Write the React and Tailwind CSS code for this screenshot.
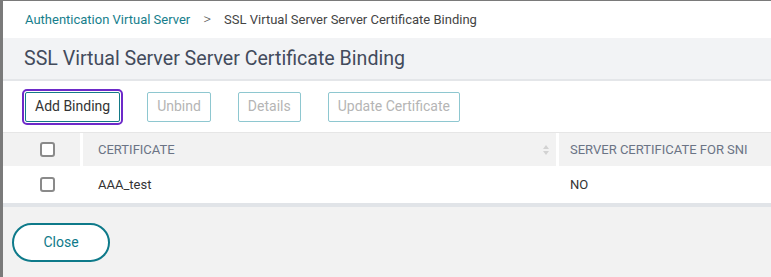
const Checkbox = () => (
  <span className="block w-[15px] h-[15px] rounded-[3px] border-2 border-[#8a8a8a] bg-white" />
)

const ToolButton = ({ children, disabled }) => (
  <button
    className={`h-[30px] px-[9px] text-[14px] rounded-[2px] border bg-white ${
      disabled
        ? 'border-[#8ec7d0] text-[#b5b5b5]'
        : 'border-[#147a87] text-[#333] outline-2 outline-offset-1 outline-[#6d2ac9]'
    }`}
  >
    {children}
  </button>
)

export default function App() {
  return (
    <div className="w-[771px] h-[277px] overflow-hidden bg-[#f2f2f2] border-t border-l-[3px] border-[#7a7a7a] font-['Roboto',sans-serif]">
      <div className="h-[37px] bg-white flex items-center pl-[22px] text-[13px]">
        <span className="text-[#167e8c]">Authentication Virtual Server</span>
        <span className="mx-[13px] text-[#555] text-[15px] font-light">&gt;</span>
        <span className="text-[#444]">SSL Virtual Server Server Certificate Binding</span>
      </div>
      <div className="h-[43px] bg-[#f2f3f5] flex items-center pl-[21px] border-b-2 border-[#e4e6e9]">
        <h1 className="text-[19.6px] text-[#434b5c]">SSL Virtual Server Server Certificate Binding</h1>
      </div>
      <div className="h-[51px] bg-white flex items-center gap-[27px] pl-[22px]">
        <ToolButton>Add Binding</ToolButton>
        <ToolButton disabled>Unbind</ToolButton>
        <ToolButton disabled>Details</ToolButton>
        <ToolButton disabled>Update Certificate</ToolButton>
      </div>
      <div className="bg-white border-b-4 border-[#e1e4e8]">
        <div className="h-[34px] flex bg-[#f2f2f2] text-[13px] text-[#6b7485] border-t border-[#e6e6e6]">
          <div className="w-[77px] flex items-center pl-[37px]">
            <Checkbox />
          </div>
          <div className="w-[3px] bg-white" />
          <div className="w-[473px] flex items-center justify-between pl-[15px] pr-[6px]">
            <span>CERTIFICATE</span>
            <svg width="8" height="12" viewBox="0 0 8 12" className="text-[#d2d2d2]">
              <path d="M4 1 L7 5 H1 Z" fill="currentColor" />
              <path d="M4 11 L7 7 H1 Z" fill="currentColor" />
            </svg>
          </div>
          <div className="w-[3px] bg-white" />
          <div className="flex-1 flex items-center pl-[11px]">SERVER CERTIFICATE FOR SNI</div>
        </div>
        <div className="h-[37px] flex items-center text-[13px] text-[#333]">
          <div className="w-[77px] flex items-center pl-[37px]">
            <Checkbox />
          </div>
          <div className="w-[476px] pl-[18px]">AAA_test</div>
          <div className="flex-1 pl-[14px]">NO</div>
        </div>
      </div>
      <div className="pl-[9px] pt-[16px]">
        <button className="w-[98px] h-[39px] rounded-full border-2 border-[#0e7a8a] bg-white text-[#0e7a8a] text-[14px]">
          Close
        </button>
      </div>
    </div>
  )
}
